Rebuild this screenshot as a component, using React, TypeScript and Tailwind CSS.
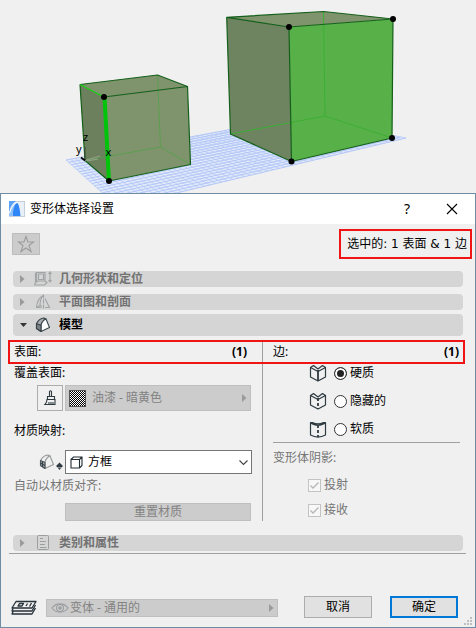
import React from "react";

type Point = [number, number];

// Corners of the ground grid: left, back, right, front
const GRID: Point[] = [[66, 160], [298, 117], [406, 138], [118, 207]];

const mix = (a: Point, b: Point, t: number): Point => [
    a[0] + (b[0] - a[0]) * t,
    a[1] + (b[1] - a[1]) * t,
];

const gridLines = (from: Point, to: Point, fromEnd: Point, toEnd: Point, count: number) =>
    Array.from({ length: count + 1 }, (_, i) => {
        const a = mix(from, to, i / count);
        const b = mix(fromEnd, toEnd, i / count);
        return `M${a[0].toFixed(1)} ${a[1].toFixed(1)}L${b[0].toFixed(1)} ${b[1].toFixed(1)}`;
    }).join("");

function Scene() {
    const [left, back, right, front] = GRID;
    return (
        <svg viewBox="0 0 476 193" className="block w-full" aria-label="3D">
            <polygon points={GRID.join(" ")} fill="#e1e9fa" />
            <path d={gridLines(left, front, back, right, 20)} stroke="#9db6f5" strokeWidth="0.7" />
            <path d={gridLines(left, back, front, right, 50)} stroke="#b0c5f6" strokeWidth="0.7" />

            {/* small cube */}
            <g strokeLinejoin="round">
                <polygon points="80,84.5 157.5,75 187.5,86.5 190.5,164.5 109,181 85,160.5" fill="#7f936d" />
                <polygon points="80,84.5 104,97 109,181 85,160.5" fill="#6c805d" />
                <path d="M157.5 75L160.5 147L190.5 164.5M160.5 147L85 160.5" stroke="#52a247" strokeWidth="0.8" fill="none" />
                <path d="M80 84.5L157.5 75L187.5 86.5L104 97M187.5 86.5L190.5 164.5L109 181L85 160.5L80 84.5" stroke="#14601a" strokeWidth="1.2" fill="none" />
                <path d="M80 84.5L104 97" stroke="#14d214" strokeWidth="1.2" />
                <path d="M85 160.5L100 156M87 161L98 159" stroke="#a5ab9c" strokeWidth="0.8" />
                <path d="M85 160V147" stroke="#3c4a38" strokeWidth="1" />
                <path d="M81 157.5L85 160.5" stroke="#000" strokeWidth="1.6" />
                <path d="M104.5 97L109 181" stroke="#00c40a" strokeWidth="4" />
            </g>
            <circle cx="104" cy="97" r="3" />
            <circle cx="109" cy="181" r="3" />
            <g fontFamily="'Noto Sans', sans-serif" fontSize="11">
                <text x="83" y="141">z</text>
                <text x="76" y="153">y</text>
                <text x="105.5" y="156">x</text>
            </g>

            {/* big cube */}
            <g strokeLinejoin="round">
                <polygon points="226.7,17.3 323.5,11.5 393,19 289,27" fill="#7f936d" />
                <polygon points="226.7,17.3 289,27 291.5,161.5 230.5,134" fill="#6e8360" />
                <polygon points="289,27 393,19 392,138 291.5,161.5" fill="#58b049" />
                <path d="M323.5 11.5L325 116L392 138M325 116L230.5 134" stroke="#3caf35" strokeWidth="1" fill="none" />
                <path d="M226.7 17.3L323.5 11.5L393 19L289 27L226.7 17.3L230.5 134L291.5 161.5L392 138L393 19M289 27L291.5 161.5" stroke="#14601a" strokeWidth="1.2" fill="none" />
            </g>
            <circle cx="289" cy="27" r="3" />
            <circle cx="393" cy="19" r="3" />
            <circle cx="392" cy="138" r="3" />
            <circle cx="291.5" cy="161.5" r="3" />
        </svg>
    );
}

function AppLogo() {
    return (
        <svg width="16" height="16" viewBox="0 0 16 16">
            <rect x="0.5" y="0.5" width="15" height="15" fill="#e9eff6" stroke="#c3cfdb" />
            <path d="M0 0H7C3.500 2 1 7 0 11Z" fill="#5aa2f8" />
            <path d="M0 15V13C1.500 7 4 2.500 8 1.500L5.500 6C4.500 9 4 12 3 15Z" fill="#8cc0fb" />
            <path d="M3.500 15C4 8 6 2 8 2C9.500 2 11 8 11.500 15Z" fill="#2f86f6" />
            <path d="M0.500 12C2 7 4.500 3 8.500 1" stroke="#fff" fill="none" />
        </svg>
    );
}

function ShapeIcon() {
    return (
        <svg width="18" height="16" viewBox="0 0 18 16" fill="none" stroke="#a2a5a6" strokeWidth="1.2">
            <path d="M2.500 1.500H11V10H2.500ZM2.500 1.500L1.500 2.500V11.500L4 10M4.500 3V8.500H9.500V3ZM1.500 11.500L0.500 14H10.500L13 11.500L11 10" />
            <path d="M16 1.500V10.500M14.500 3L16 1L17.500 3M14.500 9L16 11L17.500 9" />
        </svg>
    );
}

function SectionIcon() {
    return (
        <svg width="16" height="16" viewBox="0 0 16 16" fill="none" stroke="#a2a5a6" strokeWidth="1.1">
            <path d="M6.500 13.500H1.500C2 8 4 3.500 8 1.500M1.500 13.500L5 11.500M5 11.500C5 8 6 4 8 1.500M5 11.500L7 12.500" />
            <path d="M8.500 0.500V15.500" strokeDasharray="4 1" />
            <path d="M10 4.500L14.500 13.500H10" />
        </svg>
    );
}

function ModelIcon({ pale = false }: { pale?: boolean }) {
    const line = pale ? "#96999a" : "#39444a";
    return (
        <svg width="16" height="16" viewBox="0 0 16 16" fill="none" stroke={line} strokeWidth="1.1" strokeLinejoin="round">
            <path d="M1.500 6.500C3 3.500 5 1.500 9 1L11 2C8 3 7 5 6 8V14.500L1.500 11.500Z" fill={pale ? "#efefef" : "#a9adaf"} />
            <path d="M11 2C8 3 7 5 6 8V14.500L14.500 10.500Z" fill={pale ? "#efefef" : "#fff"} />
            <path d="M1.500 6.500L6 8.500V14.500L1.500 11.500Z" fill={pale ? "#a4a8aa" : "#7b8285"} stroke={pale ? "#4c565b" : line} />
            {pale && <path d="M1.500 9L6 11.500M3.500 7.500V13" stroke="#39444a" />}
        </svg>
    );
}

function ListIcon() {
    return (
        <svg width="14" height="16" viewBox="0 0 14 16" fill="none" stroke="#9c9f9f">
            <rect x="1.5" y="0.5" width="11" height="14" rx="1" />
            <path d="M4 3.500H7M4 6.500H10M4 9.500H9M4 12.500H10.500" />
        </svg>
    );
}

function BrushIcon() {
    return (
        <svg width="14" height="16" viewBox="0 0 14 16" fill="none" stroke="#2f3b41" strokeWidth="1.1">
            <path d="M6.500 6V1.500Q7.500 0 8.500 1.500V6M4.500 9.500V6.500H11.500V9.500M4 9.500H12V14.500H2C3.500 13 4 11.500 4 9.500Z" />
            <path d="M1.500 14.500H12M6 12V14M8 12V14M10 12V14" />
        </svg>
    );
}

function EdgeIcon({ kind }: { kind: string }) {
    const soft = kind === "soft";
    return (
        <svg width="18" height="18" viewBox="0 0 18 18" fill="none" stroke="#2f3b41" strokeWidth="1.2" strokeLinejoin="round">
            {soft ? (
                <path d="M1.500 2.500H3.500C6.500 4 11.500 4 14.500 2.500H16.500V15C12 17.500 6 17.500 1.500 15ZM1.500 2.500C5 6 13 6 16.500 2.500" />
            ) : (
                <path d="M1.500 3.500L4.500 1.500L9 5L13.500 1.500L16.500 3.500V13L9 17L1.500 13ZM1.500 3.500L9 7.500L16.500 3.500" />
            )}
            <path d={soft ? "M9 5V17" : "M9 6V17"} strokeWidth="1.8" strokeDasharray={kind === "hard" ? undefined : "3 2"} />
        </svg>
    );
}

function LayersIcon() {
    return (
        <svg width="26" height="16" viewBox="0 0 26 16" fill="none" stroke="#27323a" strokeWidth="1.3" strokeLinejoin="round">
            <path d="M5 1.500H25L21 8H1Z" fill="#f0f0f0" />
            <path d="M2 8.500L1 11H21L24.500 5M2 11.500L1 14H21L24.500 8" />
            <path d="M8.500 3.500H12.500L11 6H7ZM16.500 3.500L15 6M20.500 3L18.500 6.500" />
        </svg>
    );
}

function EyeIcon() {
    return (
        <svg width="18" height="12" viewBox="0 0 18 12" fill="none" stroke="#9b9e9f" strokeWidth="1.1">
            <path d="M1 6C5 0.500 13 0.500 17 6C13 11.500 5 11.500 1 6Z" />
            <circle cx="9" cy="6" r="3.500" />
            <circle cx="9" cy="6" r="1.200" fill="#9b9e9f" />
        </svg>
    );
}

function RightArrow() {
    return (
        <svg width="5" height="8" viewBox="0 0 5 8" fill="#9a9a9a">
            <path d="M0 0L4.500 4L0 8Z" />
        </svg>
    );
}

function SectionBar({ title, icon, open = false }: { title: string; icon: React.ReactNode; open?: boolean }) {
    return (
        <button
            type="button"
            aria-expanded={open}
            disabled={!open}
            className={`flex w-full items-center rounded-sm bg-[#d5d5d5] pl-[7px] font-bold ${open ? "h-[22px] text-black" : "h-4 text-[#727272]"}`}
        >
            <span className="flex w-3">
                {open ? (
                    <svg width="7" height="4" viewBox="0 0 7 4" fill="#333"><path d="M0 0H7L3.500 4Z" /></svg>
                ) : (
                    <RightArrow />
                )}
            </span>
            <span className="flex w-[27px] justify-center pr-[6px]">{icon}</span>
            {title}
        </button>
    );
}

const edgeTypes = [
    { kind: "hard", label: "硬质" },
    { kind: "hidden", label: "隐藏的" },
    { kind: "soft", label: "软质" },
];

function SurfaceColumn() {
    return (
        <div className="w-[255px] border-r border-[#a0a0a0] pl-[6px] pr-[11px]">
            <div>覆盖表面:</div>
            <div className="mt-[3px] flex gap-[2px] pl-[23px]">
                <button type="button" aria-label="覆盖表面" className="flex h-[26px] w-[26px] items-center justify-center border border-[#adadad]">
                    <BrushIcon />
                </button>
                <button type="button" disabled className="flex h-[26px] flex-1 items-center border border-[#bfbfbf] bg-[#cccccc] pl-[3px] pr-[3px] text-[#838383]">
                    <svg width="17" height="17" viewBox="0 0 17 17" className="mr-[6px]" shapeRendering="crispEdges">
                        <defs>
                            <pattern id="checks" width="2" height="2" patternUnits="userSpaceOnUse">
                                <rect width="2" height="2" fill="#fff" />
                                <rect width="1" height="1" />
                                <rect x="1" y="1" width="1" height="1" />
                            </pattern>
                        </defs>
                        <rect x="0.5" y="0.5" width="16" height="16" fill="url(#checks)" stroke="#555" />
                    </svg>
                    <span className="flex-1 text-left">油漆 - 暗黄色</span>
                    <RightArrow />
                </button>
            </div>

            <label htmlFor="mapping" className="mt-[11px] block">材质映射:</label>
            <div className="-mr-px mt-[10px] flex items-center pl-[25px]">
                <ModelIcon pale />
                <svg width="9" height="9" viewBox="0 0 9 9" fill="#2f3b41" className="mt-2 mr-px">
                    <path d="M4.500 0.500L8 4L6.500 5.500H2.500L1 4ZM3 6H6L4.500 8Z" />
                </svg>
                <div className="relative flex-1">
                    <select id="mapping" className="block h-6 w-full appearance-none border border-[#767676] bg-white pl-[22px] text-black outline-none">
                        <option>方框</option>
                    </select>
                    <svg width="13" height="13" viewBox="0 0 13 13" fill="none" stroke="#222d33" strokeWidth="1.1" className="pointer-events-none absolute left-[5px] top-[6px]">
                        <path d="M1 3.500L3.500 1H12V9.500L9.500 12M1 3.500H9.500V12H1ZM9.500 3.500L12 1" />
                    </svg>
                    <svg width="9" height="6" viewBox="0 0 9 6" fill="none" stroke="#444" strokeWidth="1.1" className="pointer-events-none absolute right-1 top-[10px]">
                        <path d="M0.500 0.500L4.500 4.500L8.500 0.500" />
                    </svg>
                </div>
            </div>

            <div className="mt-[3px] text-[#757575]">自动以材质对齐:</div>
            <div className="mt-2 flex pl-[51px]">
                <button type="button" disabled className="h-[18px] flex-1 border border-[#bfbfbf] bg-[#cccccc] leading-4 text-[#838383]">
                    重置材质
                </button>
            </div>
        </div>
    );
}

function EdgeColumn() {
    return (
        <div className="flex-1 pl-[10px] pr-[5px]">
            <div className="space-y-[10px] pl-9">
                {edgeTypes.map((edge) => (
                    <label key={edge.kind} className="flex h-[18px] items-center">
                        <EdgeIcon kind={edge.kind} />
                        <input
                            type="radio"
                            name="edge"
                            defaultChecked={edge.kind === "hard"}
                            className="ml-[7px] mr-[3px] h-[13px] w-[13px] appearance-none rounded-full border border-[#333] bg-white checked:bg-[#222] checked:shadow-[inset_0_0_0_2px_#fff]"
                        />
                        {edge.label}
                    </label>
                ))}
            </div>
            <hr className="mt-1 border-[#a0a0a0]" />
            <div className="mt-[6px] text-[#757575]">变形体阴影:</div>
            <div className="mt-[9px] space-y-[7px] pl-[35px] text-[#757575]">
                {["投射", "接收"].map((name) => (
                    <label key={name} className="flex h-[18px] items-center">
                        <span className="relative mr-[3px] block h-[13px] w-[13px]">
                            <input type="checkbox" defaultChecked disabled className="block h-[13px] w-[13px] appearance-none border border-[#c3c3c3] bg-[#f7f7f7]" />
                            <svg width="13" height="13" viewBox="0 0 13 13" fill="none" stroke="#b5b5b5" strokeWidth="1.3" className="absolute inset-0">
                                <path d="M2.500 6.500L5 9L10.500 3.500" />
                            </svg>
                        </span>
                        {name}
                    </label>
                ))}
            </div>
        </div>
    );
}

export default function App() {
    return (
        <div className="min-h-screen bg-[#f0f0f0] font-['Noto_Sans','Noto_Sans_CJK_SC',sans-serif] text-[12px] leading-[18px] text-black">
            <Scene />

            <div role="dialog" aria-labelledby="dialog-title" className="relative border border-[#6f8ca5]">
                {/* title bar */}
                <div className="flex h-[30px] items-center bg-white pl-2 pr-[17px]">
                    <AppLogo />
                    <h1 id="dialog-title" className="ml-[5px] flex-1">变形体选择设置</h1>
                    <button type="button" aria-label="帮助" className="mr-[36px] text-[14px]">?</button>
                    <button type="button" aria-label="关闭">
                        <svg width="12" height="12" viewBox="0 0 12 12" stroke="#000" strokeWidth="1.1">
                            <path d="M1 1L11 11M11 1L1 11" />
                        </svg>
                    </button>
                </div>

                {/* favourites + selection summary */}
                <div className="flex items-center justify-between pl-[11px] pr-[3px] pt-[5px]">
                    <button type="button" disabled aria-label="收藏夹" className="flex h-[22px] w-7 items-center justify-center border border-[#bcbcbc] bg-[#cccccc]">
                        <svg width="18" height="18" viewBox="0 0 18 18" fill="none" stroke="#9c9c9c" strokeWidth="1.1">
                            <path d="M9 1.500L11 7H16.500L12 10.500L14 16.500L9 13L4 16.500L6 10.500L1.500 7H7Z" />
                        </svg>
                    </button>
                    <div className="flex h-[30px] w-[133px] items-center justify-end border-2 border-[#f01414] pr-[3px] font-['DejaVu_Sans','Noto_Sans_CJK_SC',sans-serif]">
                        选中的: 1 表面 &amp; 1 边
                    </div>
                </div>

                <div className="mt-3 px-3">
                    <SectionBar title="几何形状和定位" icon={<ShapeIcon />} />
                    <div className="h-[7px]" />
                    <SectionBar title="平面图和剖面" icon={<SectionIcon />} />
                    <div className="h-1" />
                    <SectionBar title="模型" icon={<ModelIcon />} open />
                </div>

                <div className="ml-[7px] mr-[10px] mt-1">
                    <div className="flex h-6 border-2 border-[#f01414]">
                        <div className="flex w-[253px] items-center justify-between border-r border-[#a0a0a0] pl-1 pr-[15px]">
                            <span>表面:</span>
                            <b>(1)</b>
                        </div>
                        <div className="flex flex-1 items-center justify-between pl-[10px] pr-1">
                            <span>边:</span>
                            <b>(1)</b>
                        </div>
                    </div>
                    <div className="flex">
                        <SurfaceColumn />
                        <EdgeColumn />
                    </div>
                </div>

                <div className="mt-[14px] px-3">
                    <SectionBar title="类别和属性" icon={<ListIcon />} />
                </div>
                <hr className="ml-2 mr-[9px] mt-[2px] border-[#a0a0a0]" />

                {/* footer */}
                <div className="mt-[42px] flex items-center pb-[9px] pl-[10px] pr-[17px]">
                    <div className="flex flex-1 items-center pt-[2px]">
                        <LayersIcon />
                        <button type="button" disabled className="ml-[9px] mr-[26px] flex h-[18px] flex-1 items-center border border-[#bfbfbf] bg-[#cccccc] pl-1 pr-[3px] leading-4 text-[#838383]">
                            <EyeIcon />
                            <span className="ml-px flex-1 text-left">变体 - 通用的</span>
                            <RightArrow />
                        </button>
                    </div>
                    <button type="button" className="mr-[18px] h-[22px] w-[68px] border border-[#adadad] bg-[#e1e1e1]">取消</button>
                    <button type="button" className="h-[22px] w-[68px] border-2 border-[#0078d7] bg-[#e1e1e1]">确定</button>
                </div>
                <svg width="8" height="8" viewBox="0 0 8 8" fill="#bfbfbf" className="absolute bottom-[2px] right-[3px]">
                    <path d="M6 0h2v2h-2zM3 3h2v2h-2zM6 3h2v2h-2zM0 6h2v2h-2zM3 6h2v2h-2zM6 6h2v2h-2z" />
                </svg>
            </div>
        </div>
    );
}
